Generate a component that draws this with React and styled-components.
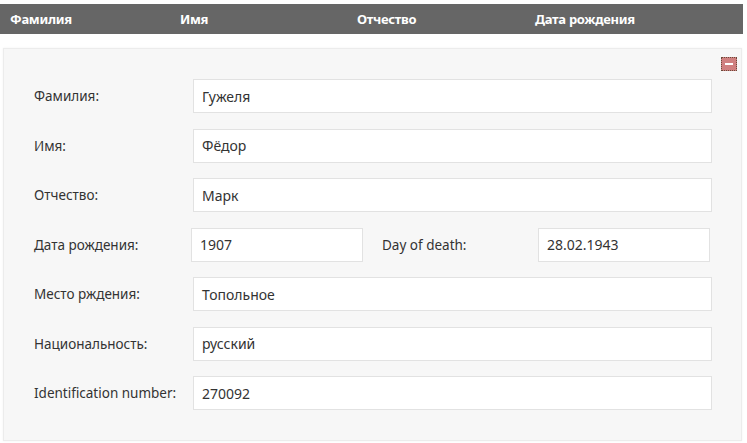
import styled, { createGlobalStyle } from "styled-components";

const Global = createGlobalStyle`
  body {
    margin: 0;
    background: #fff;
    font-family: "Noto Sans", "Liberation Sans", Arial, sans-serif;
    color: #333;
  }
`;

const Page = styled.div`
  width: 747px;
  height: 443px;
  padding-top: 4px;
  box-sizing: border-box;
`;

const HeaderBar = styled.div`
  width: 743px;
  height: 30px;
  background: #666666;
  display: grid;
  grid-template-columns: 170px 177px 178px 1fr;
  align-items: center;
  padding-left: 10px;
  box-sizing: border-box;
`;

const HeaderCell = styled.div`
  color: #fff;
  font-weight: bold;
  font-size: 13px;
  letter-spacing: -0.3px;
`;

const Panel = styled.div`
  position: relative;
  margin: 14px 5px 0 3px;
  padding: 30px 29px 30px 30px;
  background: #f7f7f7;
  border: 1px solid #ececec;
  box-shadow: 0 0 2px rgba(0, 0, 0, 0.06);
  display: flex;
  flex-direction: column;
  gap: 15.5px;
`;

const Collapse = styled.button`
  position: absolute;
  top: 8px;
  right: 4px;
  width: 16px;
  height: 14px;
  padding: 0;
  border: 1px dotted #6b4b3b;
  background: #d08080;
  display: flex;
  align-items: center;
  justify-content: center;
  cursor: pointer;

  &::after {
    content: "";
    width: 8px;
    height: 2px;
    background: #fff;
  }
`;

const Row = styled.div`
  display: flex;
  align-items: center;
  height: 34px;
`;

const Label = styled.label`
  flex: 0 0 ${(p) => p.$w || 159}px;
  font-size: 13.5px;
  color: #333;
`;

const Field = styled.div`
  flex: ${(p) => (p.$w ? `0 0 ${p.$w}px` : "1")};
  height: 34px;
  box-sizing: border-box;
  background: #fff;
  border: 1px solid #e2e2e2;
  display: flex;
  align-items: center;
  padding-left: 8px;
  font-size: 14px;
  color: #333;
`;

const Spacer = styled.div`
  flex: 0 0 ${(p) => p.$w}px;
`;

const fields = [
  ["Фамилия:", "Гужеля"],
  ["Имя:", "Фёдор"],
  ["Отчество:", "Марк"],
  null,
  ["Место рждения:", "Топольное"],
  ["Национальность:", "русский"],
  ["Identification number:", "270092"],
];

export default function App() {
  return (
    <Page>
      <Global />
      <HeaderBar>
        <HeaderCell>Фамилия</HeaderCell>
        <HeaderCell>Имя</HeaderCell>
        <HeaderCell>Отчество</HeaderCell>
        <HeaderCell>Дата рождения</HeaderCell>
      </HeaderBar>
      <Panel>
        <Collapse aria-label="collapse" />
        {fields.map((f, i) =>
          f ? (
            <Row key={i}>
              <Label>{f[0]}</Label>
              <Field>{f[1]}</Field>
            </Row>
          ) : (
            <Row key={i}>
              <Label $w={157}>Дата рождения:</Label>
              <Field $w={172}>1907</Field>
              <Spacer $w={19} />
              <Label $w={156}>Day of death:</Label>
              <Field $w={172}>28.02.1943</Field>
            </Row>
          )
        )}
      </Panel>
    </Page>
  );
}
